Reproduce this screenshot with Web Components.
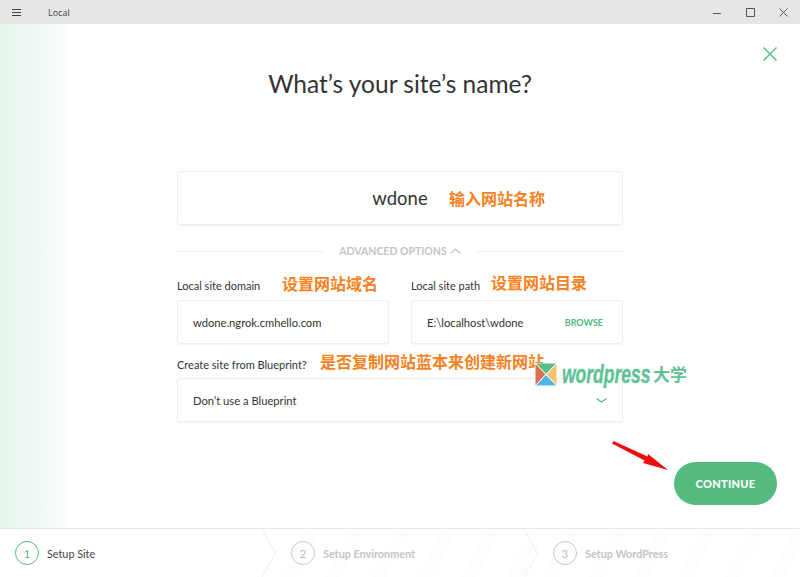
<!DOCTYPE html>
<html lang="en">
<head>
<meta charset="utf-8">
<title>Local</title>
<style>
  html, body { margin: 0; height: 100%; background: #fff; }
  body { font-family: "Lato", "Noto Sans CJK SC", sans-serif; color: #333; overflow: hidden; }
</style>
</head>
<body>
<local-app></local-app>
<script>
class TitleBar extends HTMLElement {
    constructor() {
        super();
        this.attachShadow({ mode: 'open' });
    }

    connectedCallback() {
        this.shadowRoot.innerHTML = `
      <style>
        :host {
          display: flex;
          align-items: center;
          height: 24px;
          background: #e6e6e6;
          color: #444;
          font: 9px "Open Sans", sans-serif;
        }
        .menu { display: block; margin: 0 0 0 12px; }
        .name { margin-left: 27px; flex: 1; }
        .ctl { display: block; margin-right: 24.5px; }
        .ctl:last-child { margin-right: 12px; }
      </style>
      <svg class="menu" width="9" height="7" viewBox="0 0 9 7" stroke="#444" stroke-width="1"><path d="M0 .5h9M0 3.5h9M0 6.500h9"/></svg>
      <span class="name">Local</span>
      <svg class="ctl" width="9" height="9" viewBox="0 0 9 9" stroke="#555" stroke-width="1"><path d="M1 5.5h8"/></svg>
      <svg class="ctl" width="9" height="9" viewBox="0 0 9 9" stroke="#555" stroke-width="1" fill="none"><path d="M.5 .5h8v8h-8z"/></svg>
      <svg class="ctl" width="9" height="9" viewBox="0 0 9 9" stroke="#555" stroke-width="1"><path d="M.5 .5l8 8M8.5 .5l-8 8"/></svg>
    `;
    }
}

class TextField extends HTMLElement {
    constructor() {
        super();
        this.attachShadow({ mode: 'open' });
    }

    connectedCallback() {
        this.shadowRoot.innerHTML = `
      <style>
        :host {
          display: flex;
          align-items: center;
          box-sizing: border-box;
          height: 44px;
          padding: 0 15px;
          background: #fff;
          border: 1px solid #eee;
          border-radius: 3px;
          box-shadow: 0 1px 2px rgba(0,0,0,.05);
          font-size: 11.2px;
          color: #333;
        }
        :host([big]) {
          height: 54px;
          justify-content: center;
          font-size: 18.5px;
        }
        .value { flex: 1; }
        :host([big]) .value { flex: none; }
      </style>
      <span class="value"><slot></slot></span>
      <slot name="end"></slot>
    `;
    }
}

class StepItem extends HTMLElement {
    constructor() {
        super();
        this.attachShadow({ mode: 'open' });
    }

    connectedCallback() {
        const num = this.getAttribute('num');
        this.shadowRoot.innerHTML = `
      <style>
        :host {
          display: flex;
          align-items: center;
          position: relative;
          gap: 8px;
          padding-left: 15px;
          font-size: 10.8px;
          font-weight: 700;
          color: #c4c4c4;
        }
        :host([active]) { color: #444; font-weight: 400; }
        :host(:not([active])) {
          background: repeating-linear-gradient(118deg, #fff 0 26px, #fdfdfd 26px 40px);
        }
        .circle {
          display: flex;
          align-items: center;
          justify-content: center;
          box-sizing: border-box;
          width: 24px;
          height: 24px;
          border: 1px solid #c8c8c8;
          border-radius: 50%;
          font-weight: 400;
          font-size: 11px;
          color: #bbb;
        }
        :host([active]) .circle { border: 1.5px solid #51bb7b; color: #51bb7b; }
        svg { position: absolute; right: 0; top: 0; }
      </style>
      <span class="circle">${num}</span>
      <span><slot></slot></span>
      ${this.hasAttribute('last') ? '' : '<svg width="14" height="48" viewBox="0 0 14 48" fill="none" stroke="#eee"><path d="M0 0l13.5 24L0 48"/></svg>'}
    `;
    }
}

class StepBar extends HTMLElement {
    constructor() {
        super();
        this.attachShadow({ mode: 'open' });
    }

    connectedCallback() {
        this.shadowRoot.innerHTML = `
      <style>
        :host {
          display: grid;
          grid-template-columns: 276px 262px 1fr;
          height: 48px;
          border-top: 1px solid #e6e6e6;
        }
      </style>
      <slot></slot>
    `;
    }
}

class LocalApp extends HTMLElement {
    constructor() {
        super();
        this.attachShadow({ mode: 'open' });
    }

    connectedCallback() {
        this.shadowRoot.innerHTML = `
      <style>
        :host {
          display: flex;
          flex-direction: column;
          position: relative;
          width: 800px;
          height: 577px;
          overflow: hidden;
        }
        main {
          flex: 1;
          position: relative;
          display: flex;
          flex-direction: column;
          align-items: center;
          background: linear-gradient(90deg, #e3f3ea 0, #fff 75px);
        }
        h1 {
          margin: 44px 0 0;
          font-size: 24.5px;
          font-weight: 400;
          line-height: 32px;
          color: #333;
        }
        form { display: block; width: 446px; margin-top: 71px; }
        .divider {
          display: flex;
          align-items: center;
          gap: 15px;
          margin: 20px 0 22px;
          font-size: 10.5px;
          font-weight: 700;
          line-height: 12px;
          color: #c4c4c4;
        }
        .divider::before, .divider::after { content: ""; flex: 1; height: 1px; background: #eee; }
        .divider span { display: flex; align-items: center; gap: 3px; }
        .cols { display: grid; grid-template-columns: 212px 212px; gap: 22px; }
        label { display: block; font-size: 11px; line-height: 14px; margin-bottom: 7px; color: #333; }
        .row { margin-top: 14px; }
        .row label { margin-bottom: 6px; }
        .browse { font-size: 9px; font-weight: 700; margin-right: 4px; color: #51bb7b; }
        .close { position: absolute; top: 23px; right: 23px; display: block; }
        .continue {
          position: absolute;
          top: 438px;
          left: 674px;
          width: 103px;
          height: 43px;
          display: flex;
          align-items: center;
          justify-content: center;
          border-radius: 22px;
          background: #54ba7e;
          color: #fff;
          font-size: 11px;
          font-weight: 900;
          letter-spacing: .3px;
        }
        .note {
          position: absolute;
          font: 700 16px/22px "Noto Sans CJK SC", sans-serif;
          color: #f5821f;
          white-space: nowrap;
        }
        .arrow { position: absolute; left: 611px; top: 417px; display: block; }
        .mark { position: absolute; left: 535px; top: 339px; display: block; }
        .brand {
          position: absolute;
          left: 562px;
          top: 337px;
          display: flex;
          align-items: center;
          height: 26px;
          color: #5fc297;
          white-space: nowrap;
        }
        .brand i {
          display: block;
          width: 91px;
          transform: scaleX(.7);
          transform-origin: left center;
          font: italic 700 25px/26px "Liberation Sans", sans-serif;
          -webkit-text-stroke: .4px #5fc297;
        }
        .brand b { font: 700 17px/26px "Noto Sans CJK SC", sans-serif; }
      </style>
      <title-bar></title-bar>
      <main>
        <h1>What’s your site’s name?</h1>
        <form>
          <text-field big>wdone</text-field>
          <div class="divider"><span>ADVANCED OPTIONS
            <svg width="11" height="6" viewBox="0 0 11 6" fill="none" stroke="#c4c4c4" stroke-width="1.2"><path d="M.5 5.5l5-4.5 5 4.5"/></svg>
          </span></div>
          <div class="cols">
            <div><label>Local site domain</label><text-field>wdone.ngrok.cmhello.com</text-field></div>
            <div><label>Local site path</label><text-field>E:\\localhost\\wdone<span slot="end" class="browse">BROWSE</span></text-field></div>
          </div>
          <div class="row">
            <label>Create site from Blueprint?</label>
            <text-field>Don’t use a Blueprint
              <svg slot="end" width="11" height="5" viewBox="0 0 11 5" fill="none" stroke="#51bb7b" stroke-width="1.2"><path d="M.5 .5l5 3.5 5-3.5"/></svg>
            </text-field>
          </div>
        </form>
        <svg class="close" width="14" height="14" viewBox="0 0 14 14" stroke="#51bb7b" stroke-width="1.4"><path d="M.5 .5l13 13M13.5 .5l-13 13"/></svg>
        <div class="continue">CONTINUE</div>
        <span class="note" style="left:449px;top:163px">输入网站名称</span>
        <span class="note" style="left:282px;top:248px">设置网站域名</span>
        <span class="note" style="left:491px;top:247px">设置网站目录</span>
        <span class="note" style="left:320px;top:326px">是否复制网站蓝本来创建新网站</span>
        <svg class="arrow" width="60" height="32" viewBox="0 0 60 32"><path d="M2.500 0L36.500 15.500l.5-2.500 20 16-25-7 1.500-2.500L1 2.500z" fill="#f00d0d"/></svg>
        <svg class="mark" width="22" height="23" viewBox="0 0 22 23" stroke="#fff" stroke-width="1">
          <path d="M0 0h22L11 11.500z" fill="#57bf8c"/>
          <path d="M0 0v23L11 11.500z" fill="#dc6f4f"/>
          <path d="M22 0v23L11 11.500z" fill="#f8c26c"/>
          <path d="M0 23h22L11 11.500z" fill="#4fb6e8"/>
        </svg>
        <span class="brand"><i>wordpress</i><b>大学</b></span>
      </main>
      <step-bar>
        <step-item num="1" active>Setup Site</step-item>
        <step-item num="2">Setup Environment</step-item>
        <step-item num="3" last>Setup WordPress</step-item>
      </step-bar>
    `;
    }
}

customElements.define('title-bar', TitleBar);
customElements.define('text-field', TextField);
customElements.define('step-item', StepItem);
customElements.define('step-bar', StepBar);
customElements.define('local-app', LocalApp);
</script>
</body>
</html>
